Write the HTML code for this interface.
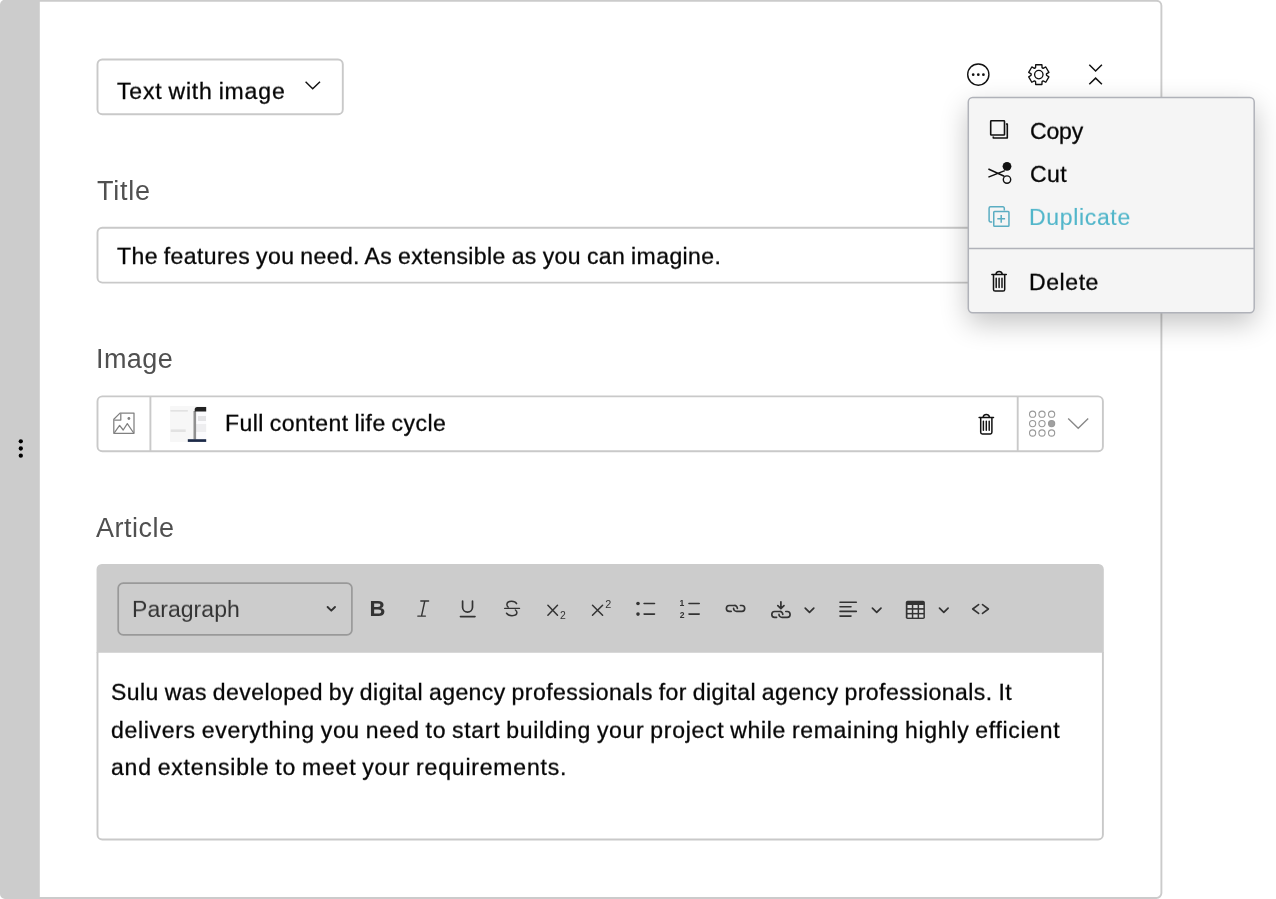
<!DOCTYPE html>
<html lang="en">
<head>
<meta charset="utf-8">
<title>Block</title>
<style>
*{box-sizing:border-box;margin:0;padding:0}
html,body{width:1276px;height:899px;overflow:hidden;background:#fff}
body{font-family:"Liberation Sans","DejaVu Sans",sans-serif;color:#000;position:relative}
.abs{position:absolute}
.txt{will-change:transform;transform:scaleY(.95);transform-origin:0 22px;position:absolute;white-space:nowrap;font-size:23px;line-height:28px;color:#050505;-webkit-text-stroke:.3px}
.label{will-change:transform;position:absolute;white-space:nowrap;font-size:27px;line-height:32px;color:#505050}
svg{position:absolute;overflow:visible;will-change:transform}
.popup{position:absolute;left:967.6px;top:96.8px;width:287.3px;height:216.6px;background:#f5f5f5;border-radius:5px;box-shadow:0 10px 28px rgba(0,0,0,.24)}
.ck{font-family:"Liberation Sans",sans-serif;color:#333}
</style>
</head>
<body>

<!-- structure -->
<svg style="left:0;top:0" width="1276" height="899" viewBox="0 0 1276 899">
<!-- card -->
<path d="M20 0.7H1156.4A5 5 0 0 1 1161.4 5.7V892.95A5 5 0 0 1 1156.4 897.95H20" fill="#fff" stroke="#cbcbcb" stroke-width="1.9"/>
<path d="M39.8 -0.2V898.9H5A5 5 0 0 1 0 893.9V4.8A5 5 0 0 1 5 -0.2Z" fill="#ccc"/>
<circle cx="20.8" cy="441.3" r="2.15" fill="#000"/><circle cx="20.8" cy="448.5" r="2.15" fill="#000"/><circle cx="20.8" cy="455.7" r="2.15" fill="#000"/>
<g fill="#fff" stroke="#c9c9c9" stroke-width="1.9">
<rect x="97.5" y="59.5" width="245.3" height="54.8" rx="4.8" />
<rect x="97.5" y="227.8" width="1005.4" height="54.8" rx="4.8" />
<rect x="97.5" y="396.4" width="1005.4" height="54.8" rx="4.8" />
<path d="M150.4 396.4V451.2M1017.7 396.4V451.2" fill="none"/>
</g>
<path d="M305.6 81.8L312.7 88.7L320 81.7" fill="none" stroke="#111" stroke-width="1.45"/>
<!-- editor -->
<path d="M97.5 652V834.7A4.8 4.8 0 0 0 102.3 839.5H1098.1A4.8 4.8 0 0 0 1102.9 834.7V652" fill="#fff" stroke="#c9c9c9" stroke-width="1.9"/>
<path d="M96.55 652.8V569.2A5.3 5.3 0 0 1 101.85 563.9H1098.5A5.3 5.3 0 0 1 1103.8 569.2V652.8Z" fill="#ccc"/>
<rect x="118.2" y="583.1" width="233.7" height="51.8" rx="5" fill="none" stroke="#999" stroke-width="1.7"/>
</svg>

<!-- type select -->
<div class="txt" id="t_type" style="left:117.06px;top:76.5px;letter-spacing:0.845px;word-spacing:-1.335px">Text with image</div>

<!-- Title -->
<div class="label" id="l_title" style="left:96.7px;top:174.8px;letter-spacing:0.734px">Title</div>
<div class="txt" id="t_title" style="left:116.7px;top:242.0px;letter-spacing:0.411px;word-spacing:-0.901px">The features you need. As extensible as you can imagine.</div>

<!-- Image -->
<div class="label" id="l_image" style="left:95.85px;top:342.9px;letter-spacing:0.44px">Image</div>
<div class="txt" id="t_image" style="left:224.63px;top:409.4px;letter-spacing:0.467px;word-spacing:-0.957px">Full content life cycle</div>

<!-- Article -->
<div class="label" id="l_article" style="left:96.3px;top:511.85px;letter-spacing:0.505px">Article</div>
<div class="txt ck" id="t_para" style="left:131.5px;top:595.0px;letter-spacing:0.05px;word-spacing:0;font-size:23px;color:#333;-webkit-text-stroke:0">Paragraph</div>

<div class="txt" id="e1" style="left:110.75px;top:678.0px;letter-spacing:0.438px;word-spacing:-0.928px">Sulu was developed by digital agency professionals for digital agency professionals. It</div>
<div class="txt" id="e2" style="left:110.89px;top:716.0px;letter-spacing:0.695px;word-spacing:-1.185px">delivers everything you need to start building your project while remaining highly efficient</div>
<div class="txt" id="e3" style="left:110.83px;top:753.4px;letter-spacing:0.809px;word-spacing:-1.299px">and extensible to meet your requirements.</div>



<!-- toolbar icons -->
<svg style="left:0;top:0" width="1276" height="899" viewBox="0 0 1276 899">
<g fill="none" stroke="#333" stroke-width="1.7" stroke-linecap="round" stroke-linejoin="round">
<path d="M327.6 607L331.3 610.7L335 607" stroke-width="1.9"/>
<!-- italic -->
<path d="M420.8 601H428.6M417.8 616.1H425.4M424.8 601L421.5 616.1" stroke-width="1.4"/>
<!-- underline -->
<path d="M462.6 601.2V607.2A4.95 4.95 0 0 0 472.5 607.2V601.2" stroke-width="1.7"/>
<path d="M460.4 616.6H475" stroke-width="1.6"/>
<!-- strike -->
<path d="M504.7 608.4H519.5" stroke-width="1.4"/>
<path d="M516.6 603.6C515.6 601.8 513.8 601.2 511.6 601.2C508.8 601.2 506.9 602.6 506.9 604.6C506.9 605.6 507.3 606.6 508.2 607.2" stroke-width="1.5"/>
<path d="M515.4 610C516.4 610.7 516.9 611.6 516.9 612.6C516.9 614.6 514.9 615.7 512 615.7C509.5 615.7 507.5 614.9 506.5 613.2" stroke-width="1.5"/>
<!-- sub -->
<path d="M547.9 605.2L557.5 615.3M557.5 605.2L547.9 615.3" stroke-width="1.5"/>
<!-- sup -->
<path d="M592.5 605.2L602.6 615.3M602.6 605.2L592.5 615.3" stroke-width="1.5"/>
<!-- bullets -->
<path d="M644.1 603.5H654.5M644.1 614.1H654.5" stroke-width="1.6"/>
<!-- numbered -->
<path d="M689 603.5H699.2M689 614.1H699.2" stroke-width="1.6"/>
<!-- link -->
<path d="M731.2 611.4H729.2A2.98 2.98 0 0 1 729.2 605.45H734.4A2.98 2.98 0 0 1 737.4 608.43" stroke-width="1.65"/>
<path d="M740.4 605.45H741.9A2.98 2.98 0 0 1 741.9 611.4H736.6A2.98 2.98 0 0 1 733.6 608.43" stroke-width="1.65"/>
<!-- internal link -->
<path d="M776.6 617.4H774.6A2.98 2.98 0 0 1 774.6 611.45H779.8A2.98 2.98 0 0 1 782.8 614.43" stroke-width="1.65"/>
<path d="M785.8 611.45H787.3A2.98 2.98 0 0 1 787.3 617.4H782.0A2.98 2.98 0 0 1 779.0 614.43" stroke-width="1.65"/>
<path d="M780.9 601.8V608M777.8 605.6L780.9 608.6L784 605.6" stroke-width="1.7"/>
<path d="M805.2 608.1L809.5 612.3L813.8000000000001 608.1"/>
<!-- align -->
<path d="M840 602.2H856.3M840 606.8H851M840 611.4H856.3M840 616.1H851" stroke-width="1.6"/>
<path d="M872.4 608.1L876.6999999999999 612.3L881.0 608.1"/>
<path d="M939.5 608.1L943.8 612.3L948.1 608.1"/>
<!-- code -->
<path d="M978.6 604.6L972.7 609L978.6 613.4M982.5 604.6L988.4 609L982.5 613.4" stroke-width="1.6"/>
</g>
<circle cx="638" cy="603.5" r="1.8" fill="#333"/><circle cx="638" cy="614.1" r="1.8" fill="#333"/>
<!-- table -->
<rect x="905.8" y="600.8" width="19.1" height="18.3" rx="1.8" fill="#333"/>
<g fill="#dadada">
<rect x="907.5" y="605" width="4.3" height="3.1"/><rect x="913.3" y="605" width="4.3" height="3.1"/><rect x="919.1" y="605" width="4.3" height="3.1"/>
<rect x="907.5" y="609.7" width="4.3" height="3.2"/><rect x="913.3" y="609.7" width="4.3" height="3.2"/><rect x="919.1" y="609.7" width="4.3" height="3.2"/>
<rect x="907.5" y="614.4" width="4.3" height="3.2"/><rect x="913.3" y="614.4" width="4.3" height="3.2"/><rect x="919.1" y="614.4" width="4.3" height="3.2"/>
</g>
<g font-family="Liberation Sans, sans-serif" fill="#333">
<text x="369.6" y="616.3" font-size="22" font-weight="bold">B</text>
<text x="560" y="618.9" font-size="10.4">2</text>
<text x="605.3" y="608.2" font-size="10.8">2</text>
<text x="679.6" y="606" font-size="8.6" font-weight="bold">1</text>
<text x="679.8" y="617.6" font-size="8.6" font-weight="bold">2</text>
</g>
</svg>

<!-- main icons -->
<svg style="left:0;top:0" width="1276" height="899" viewBox="0 0 1276 899">

<!-- ellipsis circle -->
<circle cx="978.3" cy="74.6" r="10.6" fill="none" stroke="#111" stroke-width="1.4"/>
<circle cx="973.2" cy="74.7" r="1.35" fill="#111"/><circle cx="978.3" cy="74.7" r="1.35" fill="#111"/><circle cx="983.4" cy="74.7" r="1.35" fill="#111"/>
<!-- gear -->
<path d="M1035.55 67.62L1035.69 64.73 L1041.91 64.73 L1042.05 67.62A6.9 6.9 0 0 0 1043.22 68.29L1045.79 66.97 L1048.90 72.36 L1046.47 73.93A6.9 6.9 0 0 0 1046.47 75.27L1048.90 76.84 L1045.79 82.23 L1043.22 80.91A6.9 6.9 0 0 0 1042.05 81.58L1041.91 84.47 L1035.69 84.47 L1035.55 81.58A6.9 6.9 0 0 0 1034.38 80.91L1031.81 82.23 L1028.70 76.84 L1031.13 75.27A6.9 6.9 0 0 0 1031.13 73.93L1028.70 72.36 L1031.81 66.97 L1034.38 68.29A6.9 6.9 0 0 0 1035.55 67.62 Z" fill="none" stroke="#111" stroke-width="1.35" stroke-linejoin="round"/>
<circle cx="1038.8" cy="74.6" r="4.2" fill="none" stroke="#111" stroke-width="1.35"/>
<!-- collapse -->
<path d="M1089.3 64.8L1095.6 71L1101.9 64.8M1089.3 84.3L1095.6 78.1L1101.9 84.3" fill="none" stroke="#111" stroke-width="1.5"/>
<!-- image icon -->
<g fill="none" stroke="#808080" stroke-width="1.25" stroke-linejoin="round">
<path d="M120 413.1H134V433.3H113.8V419.3Z"/>
<path d="M120.8 413.6V420H114.2"/>
<path d="M114.3 432.9L119.6 425.4L123.2 430L127.3 423.6L133.7 433"/>
</g>
<circle cx="128.9" cy="418.5" r="1.4" fill="#808080"/>
<!-- thumbnail -->
<rect x="170.1" y="406.1" width="36.1" height="35.8" fill="#f7f7f7"/>
<rect x="170.4" y="410.2" width="17.4" height="1.3" fill="#dcdcdc"/>
<rect x="170.7" y="429.4" width="15" height="2.6" fill="#e2e2e2"/>
<rect x="196" y="411.5" width="10.2" height="28" fill="#fbfbfd"/>
<rect x="198" y="416" width="8" height="5" fill="#e4e4e6"/>
<rect x="196" y="424" width="10.2" height="8" fill="#eeeef0"/>
<rect x="193.5" y="411" width="2.6" height="28.5" fill="#909090"/>
<path d="M194.7 411.5V409.4A2.5 2.5 0 0 1 197.2 406.9H206.2V411.5Z" fill="#222"/>
<rect x="187.8" y="439.2" width="18.4" height="2.7" fill="#1c2a48"/>
<!-- field trash -->
<g transform="translate(-12.8 142.9)"><g fill="none" stroke="#111" stroke-width="1.5" stroke-linecap="round" stroke-linejoin="round">
<path d="M991.9 274.5H1006.3"/>
<path d="M995.9 274.3A3.3 3.6 0 0 1 1002.3 274.3"/>
<path d="M993.5 275V289.4A1.6 1.6 0 0 0 995.1 291H1003.1A1.6 1.6 0 0 0 1004.7 289.4V275"/>
<path d="M996.2 278.2V287.4M999.1 278.2V287.4M1002 278.2V287.4" stroke-width="1.45"/>
</g></g>
<!-- grid dots -->
<g fill="none" stroke="#999" stroke-width="1.1">
<circle cx="1032.6" cy="414.2" r="3.1"/><circle cx="1042" cy="414.2" r="3.1"/><circle cx="1051.6" cy="414.2" r="3.1"/>
<circle cx="1032.6" cy="423.6" r="3.1"/><circle cx="1042" cy="423.6" r="3.1"/><circle cx="1051.6" cy="423.6" r="3.1" fill="#a0a0a0"/>
<circle cx="1032.6" cy="433" r="3.1"/><circle cx="1042" cy="433" r="3.1"/><circle cx="1051.6" cy="433" r="3.1"/>
</g>
<path d="M1068.2 418.6L1078.2 428.2L1088.2 418.6" fill="none" stroke="#888" stroke-width="1.4"/>
</svg>

<!-- popup -->
<div class="popup"></div>
<div class="txt" id="p_copy" style="left:1030.0px;top:116.5px;letter-spacing:-0.15px;word-spacing:-0.34px">Copy</div>
<div class="txt" id="p_cut" style="left:1030.25px;top:159.5px;letter-spacing:0.478px;word-spacing:-0.968px">Cut</div>
<div class="txt" id="p_dup" style="-webkit-text-stroke:.12px;left:1028.93px;top:202.6px;letter-spacing:0.666px;word-spacing:-1.156px;color:#52b6ca">Duplicate</div>
<div class="txt" id="p_del" style="left:1028.5px;top:267.5px;letter-spacing:0.585px;word-spacing:-1.075px">Delete</div>

<!-- popup icons -->
<svg style="left:0;top:0" width="1276" height="899" viewBox="0 0 1276 899">
<rect x="968.3" y="97.5" width="285.9" height="215.2" rx="4.4" fill="none" stroke="#b0b2b9" stroke-width="1.5"/>
<path d="M968.3 248.4H1254.2" stroke="#b0b2b9" stroke-width="1.5"/>
<g fill="none" stroke="#111" stroke-width="1.6" stroke-linejoin="round">
<rect x="990.7" y="120.8" width="13.8" height="14.2" rx="0.6"/>
<path d="M1005.9 124H1007.3V138H993.3V136.6"/>
</g>
<!-- cut -->
<circle cx="1007" cy="166.3" r="4.4" fill="#111"/>
<circle cx="1007" cy="179.6" r="3.7" fill="none" stroke="#111" stroke-width="1.4"/>
<path d="M988.4 169L1004.3 176.3M988.4 177.1L1004.8 170.6" fill="none" stroke="#111" stroke-width="1.5"/>
<!-- duplicate -->
<g fill="none" stroke="#5badc2" stroke-width="1.5" stroke-linejoin="round">
<rect x="993.75" y="211.55" width="15.2" height="14.8" rx="0.8"/>
<path d="M1004.3 210.4V208.2A1.4 1.4 0 0 0 1002.9 206.8H990.5A1.4 1.4 0 0 0 989.1 208.2V220.6A1.4 1.4 0 0 0 990.5 222H992.2"/>
<path d="M997.3 218.8H1005.1M1001.2 214.9V222.7"/>
</g>
<g fill="none" stroke="#111" stroke-width="1.5" stroke-linecap="round" stroke-linejoin="round">
<path d="M991.9 274.5H1006.3"/>
<path d="M995.9 274.3A3.3 3.6 0 0 1 1002.3 274.3"/>
<path d="M993.5 275V289.4A1.6 1.6 0 0 0 995.1 291H1003.1A1.6 1.6 0 0 0 1004.7 289.4V275"/>
<path d="M996.2 278.2V287.4M999.1 278.2V287.4M1002 278.2V287.4" stroke-width="1.45"/>
</g>
</svg>
</body>
</html>
